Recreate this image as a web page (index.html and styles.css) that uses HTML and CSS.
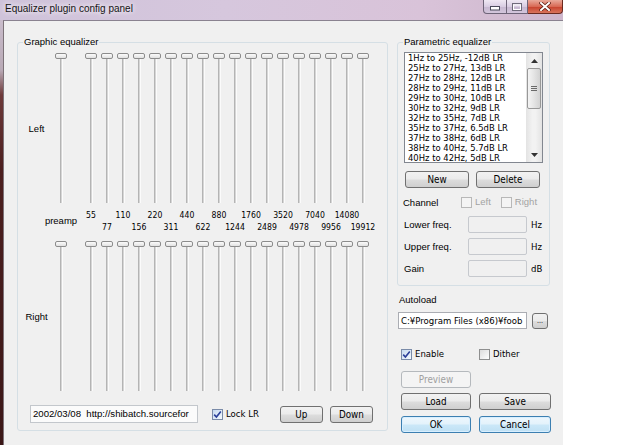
FILE: index.html
```html
<!DOCTYPE html>
<html>
<head>
<meta charset="utf-8">
<title>Equalizer plugin config panel</title>
<link rel="stylesheet" href="styles.css">
</head>
<body>
<div class="window">
  <div class="titlebar">
    <span class="title">Equalizer plugin config panel</span>
    <div class="controls">
      <span class="ctl min"><svg width="10" height="5" viewBox="0 0 10 5"><rect x="0.5" y="0.5" width="9" height="3.5" fill="#fff" stroke="#4a4a5a"/></svg></span>
      <span class="ctl max"><svg width="10" height="8" viewBox="0 0 10 8"><rect x="0.5" y="0.5" width="9" height="7" fill="none" stroke="#6f6a7a"/><rect x="1.5" y="2" width="7" height="4.5" fill="none" stroke="#fff"/></svg></span>
      <span class="ctl close"><svg width="12" height="9" viewBox="0 0 12 9"><path d="M2 1 L10 8 M10 1 L2 8" stroke="#5a1a10" stroke-width="3.4" stroke-linecap="square"/><path d="M2 1 L10 8 M10 1 L2 8" stroke="#fff" stroke-width="2" stroke-linecap="square"/></svg></span>
    </div>
  </div>
  <div class="body">
    <div class="frame-left"></div>
    <div class="client">
      <fieldset class="group geq">
        <legend>Graphic equalizer</legend>
        <div class="geq-inner">
          <div class="channel">
            <div class="chlabel">Left</div>
            <div class="sliders">
              <div class="slider pre"><div class="thumb"></div><div class="track"></div></div>
              <div class="slider"><div class="thumb"></div><div class="track"></div></div>
              <div class="slider"><div class="thumb"></div><div class="track"></div></div>
              <div class="slider"><div class="thumb"></div><div class="track"></div></div>
              <div class="slider"><div class="thumb"></div><div class="track"></div></div>
              <div class="slider"><div class="thumb"></div><div class="track"></div></div>
              <div class="slider"><div class="thumb"></div><div class="track"></div></div>
              <div class="slider"><div class="thumb"></div><div class="track"></div></div>
              <div class="slider"><div class="thumb"></div><div class="track"></div></div>
              <div class="slider"><div class="thumb"></div><div class="track"></div></div>
              <div class="slider"><div class="thumb"></div><div class="track"></div></div>
              <div class="slider"><div class="thumb"></div><div class="track"></div></div>
              <div class="slider"><div class="thumb"></div><div class="track"></div></div>
              <div class="slider"><div class="thumb"></div><div class="track"></div></div>
              <div class="slider"><div class="thumb"></div><div class="track"></div></div>
              <div class="slider"><div class="thumb"></div><div class="track"></div></div>
              <div class="slider"><div class="thumb"></div><div class="track"></div></div>
              <div class="slider"><div class="thumb"></div><div class="track"></div></div>
              <div class="slider"><div class="thumb"></div><div class="track"></div></div>
            </div>
          </div>
          <div class="freqs">
            <div class="fl pre">preamp</div>
            <div class="fl num">55</div>
            <div class="fl num lo">77</div>
            <div class="fl num">110</div>
            <div class="fl num lo">156</div>
            <div class="fl num">220</div>
            <div class="fl num lo">311</div>
            <div class="fl num">440</div>
            <div class="fl num lo">622</div>
            <div class="fl num">880</div>
            <div class="fl num lo">1244</div>
            <div class="fl num">1760</div>
            <div class="fl num lo">2489</div>
            <div class="fl num">3520</div>
            <div class="fl num lo">4978</div>
            <div class="fl num">7040</div>
            <div class="fl num lo">9956</div>
            <div class="fl num">14080</div>
            <div class="fl num lo">19912</div>
          </div>
          <div class="channel ch-right">
            <div class="chlabel">Right</div>
            <div class="sliders">
              <div class="slider pre"><div class="thumb"></div><div class="track"></div></div>
              <div class="slider"><div class="thumb"></div><div class="track"></div></div>
              <div class="slider"><div class="thumb"></div><div class="track"></div></div>
              <div class="slider"><div class="thumb"></div><div class="track"></div></div>
              <div class="slider"><div class="thumb"></div><div class="track"></div></div>
              <div class="slider"><div class="thumb"></div><div class="track"></div></div>
              <div class="slider"><div class="thumb"></div><div class="track"></div></div>
              <div class="slider"><div class="thumb"></div><div class="track"></div></div>
              <div class="slider"><div class="thumb"></div><div class="track"></div></div>
              <div class="slider"><div class="thumb"></div><div class="track"></div></div>
              <div class="slider"><div class="thumb"></div><div class="track"></div></div>
              <div class="slider"><div class="thumb"></div><div class="track"></div></div>
              <div class="slider"><div class="thumb"></div><div class="track"></div></div>
              <div class="slider"><div class="thumb"></div><div class="track"></div></div>
              <div class="slider"><div class="thumb"></div><div class="track"></div></div>
              <div class="slider"><div class="thumb"></div><div class="track"></div></div>
              <div class="slider"><div class="thumb"></div><div class="track"></div></div>
              <div class="slider"><div class="thumb"></div><div class="track"></div></div>
              <div class="slider"><div class="thumb"></div><div class="track"></div></div>
            </div>
          </div>
          <div class="bottomrow">
            <div class="info">2002/03/08&nbsp;&nbsp;http://shibatch.sourcefor</div>
            <label class="chk lock"><span class="box checked"><svg width="9" height="9" viewBox="0 0 9 9"><path d="M1.2 4.6 L3.4 7 L7.8 1.4" fill="none" stroke="#2b3f99" stroke-width="1.6"/></svg></span><span class="nar">Lock LR</span></label>
            <span class="btn up">Up</span>
            <span class="btn down">Down</span>
          </div>
        </div>
      </fieldset>

      <div class="rightcol">
        <fieldset class="group peq">
          <legend>Parametric equalizer</legend>
          <div class="peq-inner">
            <div class="list">
              <div class="items">
                <div>1Hz to 25Hz, -12dB LR</div>
                <div>25Hz to 27Hz, 13dB LR</div>
                <div>27Hz to 28Hz, 12dB LR</div>
                <div>28Hz to 29Hz, 11dB LR</div>
                <div>29Hz to 30Hz, 10dB LR</div>
                <div>30Hz to 32Hz, 9dB LR</div>
                <div>32Hz to 35Hz, 7dB LR</div>
                <div>35Hz to 37Hz, 6.5dB LR</div>
                <div>37Hz to 38Hz, 6dB LR</div>
                <div>38Hz to 40Hz, 5.7dB LR</div>
                <div>40Hz to 42Hz, 5dB LR</div>
              </div>
              <div class="sb">
                <div class="sb-arrow"><svg width="7" height="4" viewBox="0 0 7 4"><path d="M0 4 L3.5 0 L7 4 Z" fill="#333"/></svg></div>
                <div class="sb-thumb"><svg width="6" height="5" viewBox="0 0 6 5"><path d="M0 0.5 H6 M0 2.5 H6 M0 4.5 H6" stroke="#6a6a6a" stroke-width="1"/></svg></div>
                <div class="sb-track"></div>
                <div class="sb-arrow"><svg width="7" height="4" viewBox="0 0 7 4"><path d="M0 0 L3.5 4 L7 0 Z" fill="#333"/></svg></div>
              </div>
            </div>
            <div class="btnrow">
              <span class="btn w64">New</span>
              <span class="btn w64">Delete</span>
            </div>
            <div class="chanrow">
              <span class="lbl chan">Channel</span>
              <label class="chk dis"><span class="box"></span><span>Left</span></label>
              <label class="chk dis right"><span class="box"></span><span>Right</span></label>
            </div>
            <div class="frow">
              <span class="lbl flbl">Lower freq.</span>
              <span class="field"></span>
              <span class="unit nar">Hz</span>
            </div>
            <div class="frow">
              <span class="lbl flbl">Upper freq.</span>
              <span class="field"></span>
              <span class="unit nar">Hz</span>
            </div>
            <div class="frow">
              <span class="lbl flbl">Gain</span>
              <span class="field"></span>
              <span class="unit nar">dB</span>
            </div>
          </div>
        </fieldset>

        <div class="autolabel">Autoload</div>
        <div class="autorow">
          <div class="pathfield nar">C:¥Program Files (x86)¥foob</div>
          <span class="btn browse">...</span>
        </div>

        <div class="grid2 opts">
          <label class="chk"><span class="box checked"><svg width="9" height="9" viewBox="0 0 9 9"><path d="M1.2 4.6 L3.4 7 L7.8 1.4" fill="none" stroke="#2b3f99" stroke-width="1.6"/></svg></span><span class="nar">Enable</span></label>
          <label class="chk"><span class="box"></span><span class="nar">Dither</span></label>
        </div>
        <div class="grid2 preview-row">
          <span class="btn disabled">Preview</span>
        </div>
        <div class="grid2 load-row">
          <span class="btn">Load</span>
          <span class="btn">Save</span>
        </div>
        <div class="grid2 ok-row">
          <span class="btn def">OK</span>
          <span class="btn def">Cancel</span>
        </div>
      </div>
    </div>
  </div>
</div>
</body>
</html>
```

FILE: styles.css
```css
* { box-sizing: border-box; }
html, body { margin: 0; padding: 0; }
body {
  background: #ffffff;
  width: 640px;
  height: 445px;
  overflow: hidden;
  font-family: "Liberation Sans", Arial, sans-serif;
  font-size: 9.5px;
  color: #000;
}
.nar {
  font-family: "DejaVu Sans Condensed", "Liberation Sans Narrow", sans-serif;
  font-size: 9.5px;
}

.window {
  width: 563px;
  height: 445px;
  display: flex;
  flex-direction: column;
}

/* title bar */
.titlebar {
  height: 20px;
  flex: none;
  display: flex;
  justify-content: space-between;
  align-items: flex-start;
  background: linear-gradient(to right, #cfc3da 0%, #d6c7dd 40%, #d9c3d9 75%, #cdb6cc 100%);
}
.title {
  font-size: 10px;
  line-height: 12px;
  padding: 3px 0 0 5px;
  color: #151515;
  text-shadow: 0 0 4px #f4eef6, 0 0 6px #f4eef6;
}
.controls { display: flex; height: 14px; }
.ctl {
  height: 14px;
  display: flex;
  align-items: center;
  justify-content: center;
  border: 1px solid #6e6478;
  border-top: none;
  border-left: none;
}
.ctl.min {
  width: 24px;
  border-left: 1px solid #6e6478;
  border-radius: 0 0 0 4px;
  background: linear-gradient(#efe8f3, #d9cde2 50%, #c6b7d0 51%, #d3c6dc);
}
.ctl.min svg { margin-top: 4px; }
.ctl.max {
  width: 21px;
  background: linear-gradient(#efe8f3, #d9cde2 50%, #c6b7d0 51%, #d3c6dc);
}
.ctl.close {
  width: 35px;
  border-radius: 0 0 4px 0;
  border-color: #6b2a20;
  background: linear-gradient(#e9a99a, #d86a55 50%, #c7402b 51%, #d8745c);
}

.body { flex: 1; display: flex; min-height: 0; }
.frame-left {
  width: 3px;
  flex: none;
  background: linear-gradient(#c9bccb 0, #b9aab6 50px, #6e3a3a 75px, #4c1f1f 150px, #3b1717 100%);
}
.client {
  flex: 1;
  background: #f0f0f0;
  border-top: 1px solid #8a8290;
  border-left: 1px solid #7c7278;
  display: flex;
  align-items: flex-start;
  padding: 15px 0 0 13px;
}

/* group boxes */
fieldset.group {
  margin: 0;
  padding: 0;
  border: 1px solid #d5dfe5;
  border-radius: 3px;
  min-width: 0;
}
fieldset.group legend {
  padding: 0 1px;
  margin-left: 5px;
  line-height: 12px;
}

.geq { width: 371px; flex: none; }
.geq-inner { padding: 5px 0 7px 4px; }

.channel { display: flex; height: 150px; }
.ch-right { margin-top: 8px; }
.chlabel {
  width: 29px;
  margin-right: 2px;
  display: flex;
  align-items: center;
  justify-content: center;
}
.sliders { display: flex; }
.slider {
  width: 16px;
  display: flex;
  flex-direction: column;
  align-items: center;
}
.slider.pre { margin-right: 14px; }
.thumb {
  width: 12px;
  height: 6px;
  flex: none;
  border: 1px solid #8c8c8c;
  border-radius: 2px;
  background: linear-gradient(#fbfbfb, #e2e2e2);
  position: relative;
  z-index: 1;
}
.track {
  width: 3px;
  flex: 1;
  margin-top: -1px;
  background: linear-gradient(to right, #b4b4b4 0 1px, #d6d6d6 1px 2px, #fbfbfb 2px 3px);
}

.freqs {
  display: flex;
  align-items: flex-start;
  margin: 6px 0 0 31px;
  height: 24px;
}
.fl {
  width: 16px;
  height: 12px;
  line-height: 12px;
  display: flex;
  justify-content: center;
  white-space: nowrap;
}
.fl.num {
  font-family: "DejaVu Sans Condensed", "Liberation Sans Narrow", sans-serif;
  font-size: 8.6px;
}
.fl.lo { margin-top: 12px; }
.fl.pre { height: 24px; align-items: center; margin-right: 14px; }

.bottomrow {
  display: flex;
  align-items: center;
  height: 18px;
  margin-top: 14px;
}
.info {
  margin-left: 8px;
  width: 168px;
  height: 18px;
  border: 1px solid #c3c7cc;
  background: #fbfbfb;
  padding: 0 2px;
  font-size: 9.6px;
  line-height: 16px;
  white-space: nowrap;
  overflow: hidden;
}
.lock { margin-left: 14px; }
.btn {
  display: flex;
  align-items: center;
  justify-content: center;
  height: 17px;
  border: 1px solid #707070;
  border-radius: 3px;
  background: linear-gradient(#f2f2f2 0%, #ebebeb 48%, #dddddd 52%, #cfcfcf 100%);
  font-family: "DejaVu Sans Condensed", "Liberation Sans Narrow", sans-serif;
  font-size: 9.8px;
  white-space: nowrap;
}
.btn.up { margin-left: 21px; width: 43px; }
.btn.down { margin-left: 7px; width: 43px; }

/* checkboxes */
.chk { display: flex; align-items: center; gap: 3px; line-height: 12px; }
.box {
  width: 11px;
  height: 11px;
  flex: none;
  border: 1px solid #8e8f8f;
  background: linear-gradient(135deg, #dcdcdc, #f4f4f4 70%, #ffffff);
  display: flex;
  align-items: center;
  justify-content: center;
}
.box.checked {
  border-color: #7a8ba8;
  background: linear-gradient(135deg, #c6d9ef, #e6f0fa 70%, #f6fafe);
}
.chk.dis { color: #a3a3a3; }
.chk.dis .box { border-color: #b8b8b8; background: #f4f4f4; }

/* right column */
.rightcol {
  margin-left: 9px;
  width: 155px;
  flex: none;
  display: flex;
  flex-direction: column;
}
.peq { width: 153px; }
.peq-inner { padding: 4px 0 8px 6px; }

.list {
  width: 139px;
  height: 111px;
  border: 1px solid #828790;
  background: #fff;
  display: flex;
}
.items {
  flex: 1;
  min-width: 0;
  padding: 0 0 0 3px;
  font-family: "DejaVu Sans Condensed", "Liberation Sans Narrow", sans-serif;
  font-size: 9.4px;
  line-height: 10px;
  white-space: nowrap;
  overflow: hidden;
}
.sb {
  width: 16px;
  flex: none;
  display: flex;
  flex-direction: column;
  background: linear-gradient(to right, #e3e3e3, #f2f2f2 40%, #f2f2f2 60%, #e3e3e3);
}
.sb-arrow {
  height: 15px;
  display: flex;
  align-items: center;
  justify-content: center;
}
.sb-thumb {
  height: 41px;
  margin: 0 1px;
  border: 1px solid #989898;
  border-radius: 2px;
  background: linear-gradient(to right, #f4f4f4, #e4e4e4 50%, #d2d2d2);
  display: flex;
  align-items: center;
  justify-content: center;
}
.sb-track { flex: 1; }

.btnrow { display: flex; gap: 7px; margin: 8px 0 0 1px; }
.w64 { width: 64px; }

.chanrow {
  display: flex;
  align-items: center;
  height: 12px;
  margin-top: 8px;
}
.lbl.chan { width: 58px; margin-left: -1px; }
.chk.right { margin-left: 10px; }

.frow {
  display: flex;
  align-items: center;
  height: 17px;
  margin-top: 5px;
}
.chanrow + .frow { margin-top: 8px; }
.flbl { width: 64px; }
.field {
  width: 59px;
  height: 17px;
  border: 1px solid #c6c9ce;
  border-radius: 2px;
  background: #f0f0f0;
}
.unit { margin-left: 4px; }

.autolabel { margin: 8px 0 0 2px; line-height: 12px; }
.autorow { display: flex; align-items: center; margin-top: 6px; }
.pathfield {
  margin-left: 1px;
  width: 129px;
  height: 17px;
  border: 1px solid #abadb3;
  background: #fff;
  padding: 0 2px;
  line-height: 15px;
  white-space: nowrap;
  overflow: hidden;
}
.btn.browse {
  margin-left: 5px;
  width: 16px;
  height: 16px;
  font-size: 7px;
  line-height: 8px;
  align-items: flex-end;
  padding-bottom: 3px;
}

.grid2 {
  display: grid;
  grid-template-columns: 70px 72px;
  column-gap: 8px;
  margin-left: 4px;
}
.opts { margin-top: 19px; height: 12px; }
.preview-row { margin-top: 11px; }
.load-row { margin-top: 5px; }
.ok-row { margin-top: 6px; }
.btn.disabled {
  color: #a0a0a0;
  border-color: #b5b9bd;
  background: #f4f4f4;
}
.btn.def {
  border-color: #3c7fb1;
  background: linear-gradient(#eef7fd 0%, #e3f2fb 48%, #cbe8f8 52%, #bfe0f4 100%);
  box-shadow: inset 0 0 0 1px #d8efff;
}
```
